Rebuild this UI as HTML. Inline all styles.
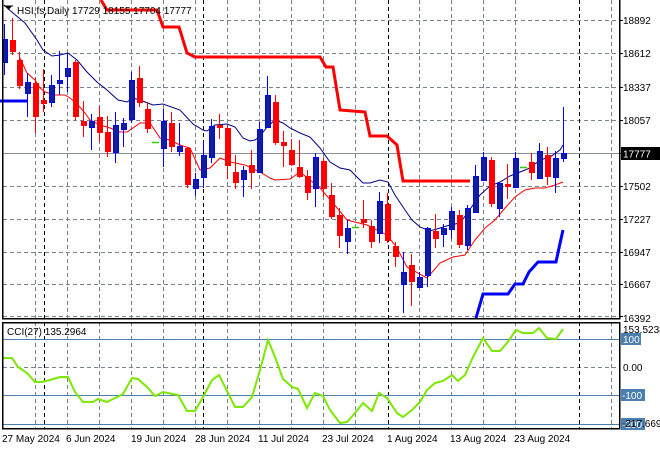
<!DOCTYPE html>
<html><head><meta charset="utf-8"><style>
html,body{margin:0;padding:0;background:#fff;}
svg{display:block;font-family:"Liberation Sans",sans-serif;font-size:10px;}
</style></head><body>
<svg width="660" height="450" viewBox="0 0 660 450" xmlns="http://www.w3.org/2000/svg">
<rect width="660" height="450" fill="#fff"/>
<g stroke="#7a8290" stroke-width="1" stroke-dasharray="4,3" fill="none" shape-rendering="crispEdges">
<path d="M35.5 0V428M67.5 0V428M99.5 0V428M131.5 0V428M163.5 0V428M195.5 0V428M227.5 0V428M259.5 0V428M291.5 0V428M323.5 0V428M355.5 0V428M419.5 0V428M451.5 0V428M483.5 0V428M515.5 0V428M611.5 0V428"/>
<path d="M3 20.5H619M3 53.5H619M3 87.5H619M3 120.5H619M3 186.5H619M3 219.5H619M3 252.5H619M3 284.5H619M3 316.5H619M3 367.5H619"/>
</g>
<g stroke="#000" stroke-width="1" stroke-dasharray="4,3" shape-rendering="crispEdges">
<path d="M44.5 0V428M203.5 0V428M388.5 0V428M579.5 0V428"/>
</g>
<path d="M3 153.5H619" stroke="#8a8f99" shape-rendering="crispEdges"/>
<g stroke="#4a7fb0" stroke-width="1.2" shape-rendering="crispEdges">
<path d="M3 339.5H619M3 395.5H619M3 424.5H619"/>
</g>
<polyline fill="none" stroke="#ff0000" stroke-width="3" points="101,0 107,10 157,10 163,27 179,27 187,53 195,57 320,57 326,67 333,67 340,110 365,112 370,136 387,136 397,145 403,181 470,181"/>
<polyline fill="none" stroke="#0000ff" stroke-width="3" points="0,101 27,101"/>
<polyline fill="none" stroke="#0000ff" stroke-width="3" points="476,318 483,294 508,294 515,284 523,284 529,272 538,262 556,262 559,248 563,230"/>
<polyline fill="none" stroke="#000080" stroke-width="1" points="4,5 13,13 25,23 37,40 43,50 52,56 60,55 68,53 77,60 87,72 97,82 107,90 118,100 127,102 133,98 140,100 153,105 163,104 180,110 193,124 203,130 207,131 215,125 227,124 235,127 243,138 250,141 255,140 260,136 267,127 275,120 283,123 290,128 300,133 310,137 320,148 330,162 340,168 350,170 357,177 363,183 370,183 380,180 388,182 395,195 405,210 412,220 420,227 430,231 440,228 450,225 460,223 466,215 480,195 490,186 500,182 510,176 520,172 530,168 540,160 550,157 560,150 563,145"/>
<polyline fill="none" stroke="#ff0000" stroke-width="1" points="20,58 27,73 35,80 40,88 45,92 55,95 65,95 70,98 78,105 85,113 90,120 100,125 110,128 120,132 127,132 133,128 140,123 150,123 160,138 170,140 180,145 190,148 200,170 210,168 220,158 230,162 245,165 260,172 270,178 275,180 290,179 300,172 320,188 333,203 347,220 367,225 387,235 397,248 407,267 427,278 440,263 453,257 465,255 475,240 485,228 495,220 505,208 515,197 525,190 535,188 545,188 555,185 563,182"/>
<g fill="#ff0000" stroke="#ff0000" shape-rendering="crispEdges">
<path fill="none" d="M12.5 18V55M19.5 52V89M35.5 78V133M43.5 69V112M75.5 60V120M83.5 101V137M99.5 106V142M107.5 116V157M139.5 66V107M147.5 102V133M171.5 112V152M187.5 147V188M219.5 114V139M227.5 125V179M235.5 155V189M251.5 150V189M275.5 95V145M283.5 131V167M291.5 139V166M299.5 140V178M307.5 170V200M323.5 158V197M331.5 183V219M339.5 208V248M363.5 200V228M371.5 220V248M387.5 193V243M395.5 242V267M411.5 254V306M435.5 214V248M459.5 210V248M491.5 157V207M507.5 164V199M531.5 153V180M547.5 147V185"/>
<g stroke="none">
<rect x="10" y="40" width="6" height="12"/><rect x="17" y="60" width="6" height="26"/><rect x="33" y="83" width="6" height="34"/><rect x="41" y="100" width="6" height="4"/><rect x="73" y="62" width="6" height="55"/><rect x="81" y="121" width="6" height="5"/><rect x="97" y="117" width="6" height="16"/><rect x="105" y="132" width="6" height="20"/><rect x="137" y="78" width="6" height="25"/><rect x="145" y="109" width="6" height="20"/><rect x="169" y="123" width="6" height="24"/><rect x="185" y="148" width="6" height="37"/><rect x="217" y="125" width="6" height="3"/><rect x="225" y="128" width="6" height="38"/><rect x="233" y="172" width="6" height="11"/><rect x="249" y="165" width="6" height="8"/><rect x="273" y="102" width="6" height="41"/><rect x="281" y="142" width="6" height="4"/><rect x="289" y="150" width="6" height="15"/><rect x="297" y="167" width="6" height="10"/><rect x="305" y="176" width="6" height="17"/><rect x="321" y="161" width="6" height="28"/><rect x="329" y="195" width="6" height="22"/><rect x="337" y="215" width="6" height="21"/><rect x="361" y="219" width="6" height="4"/><rect x="369" y="226" width="6" height="16"/><rect x="385" y="204" width="6" height="37"/><rect x="393" y="246" width="6" height="11"/><rect x="409" y="265" width="6" height="17"/><rect x="433" y="231" width="6" height="8"/><rect x="457" y="215" width="6" height="30"/><rect x="489" y="160" width="6" height="44"/><rect x="505" y="184" width="6" height="3"/><rect x="529" y="162" width="6" height="11"/><rect x="545" y="155" width="6" height="22"/>
</g></g>
<g shape-rendering="crispEdges">
<path fill="none" stroke="#0000ff" d="M4.5 24V75M27.5 73V117M51.5 75V107M59.5 51V95M67.5 53V92M91.5 114V150M115.5 112V163M123.5 118V147M131.5 72V123M163.5 109V167M179.5 123V156M195.5 173V196M203.5 142V188M211.5 119V163M243.5 166V197M259.5 122V173M267.5 76V128M315.5 153V207M347.5 220V254M379.5 192V243M403.5 252V313M419.5 272V288M427.5 227V287M443.5 224V247M451.5 207V239M467.5 205V250M475.5 165V212M483.5 152V180M499.5 182V217M515.5 152V188M539.5 143V178M555.5 151V193M563.5 107V162"/>
<g fill="#10209a" stroke="#0000ff">
<rect x="2.5" y="39.5" width="5" height="23"/><rect x="25.5" y="82.5" width="5" height="11"/><rect x="49.5" y="85.5" width="5" height="17"/><rect x="57.5" y="80.5" width="5" height="3"/><rect x="65.5" y="68.5" width="5" height="8"/><rect x="89.5" y="121.5" width="5" height="6"/><rect x="113.5" y="125.5" width="5" height="27"/><rect x="121.5" y="123.5" width="5" height="6"/><rect x="129.5" y="80.5" width="5" height="39"/><rect x="161.5" y="121.5" width="5" height="27"/><rect x="177.5" y="146.5" width="5" height="5"/><rect x="193.5" y="179.5" width="5" height="9"/><rect x="201.5" y="155.5" width="5" height="22"/><rect x="209.5" y="126.5" width="5" height="31"/><rect x="241.5" y="170.5" width="5" height="9"/><rect x="257.5" y="129.5" width="5" height="43"/><rect x="265.5" y="95.5" width="5" height="32"/><rect x="313.5" y="157.5" width="5" height="31"/><rect x="345.5" y="228.5" width="5" height="13"/><rect x="377.5" y="201.5" width="5" height="32"/><rect x="401.5" y="272.5" width="5" height="12"/><rect x="417.5" y="277.5" width="5" height="10"/><rect x="425.5" y="228.5" width="5" height="47"/><rect x="441.5" y="228.5" width="5" height="6"/><rect x="449.5" y="211.5" width="5" height="18"/><rect x="465.5" y="208.5" width="5" height="37"/><rect x="473.5" y="176.5" width="5" height="36"/><rect x="481.5" y="157.5" width="5" height="23"/><rect x="497.5" y="183.5" width="5" height="25"/><rect x="513.5" y="158.5" width="5" height="29"/><rect x="537.5" y="151.5" width="5" height="27"/><rect x="553.5" y="158.5" width="5" height="19"/><rect x="561.5" y="153.5" width="5" height="5"/>
</g></g>
<path d="M152 142.5H159M352 227.5H359M520 167.5H527" stroke="#33cc00" stroke-width="1.5"/>
<polyline fill="none" stroke="#7ce800" stroke-width="2" points="3,358 12,358 18,367 27,373 35,382 42,382 50,380 60,377 68,377 75,392 83,402 93,402 98,399 107,402 115,398 123,394 132,378 138,379 147,387 155,396 163,392 178,395 187,411 195,411 203,397 212,380 219,375 235,407 243,407 252,397 260,370 268,340 275,357 283,379 292,387 298,389 307,408 315,393 323,396 330,410 340,423 347,422 355,413 363,403 372,411 379,393 387,398 397,413 403,417 412,410 420,402 427,390 435,383 443,381 452,375 458,381 465,375 473,357 483,338 492,351 500,351 507,343 516,330 523,333 533,333 539,328 547,338 556,339 563,329"/>
<g fill="none" stroke="#000" stroke-width="1.5" shape-rendering="crispEdges">
<path d="M2.5 0V318.5H619.5V0"/>
<path d="M2.5 322.5H619.5V428.5H2.5Z"/>
</g>
<path d="M5 6L12 6L8.5 10Z" fill="#000"/>
<path d="M4 6H13" stroke="#000"/>
<text x="17" y="14" fill="#000">HSI,fs,Daily  17729 18155 17704 17777</text>
<text x="7" y="335" fill="#000">CCI(27) 135.2964</text>
<g fill="#000">
<text x="623" y="24">18892</text>
<text x="623" y="57">18612</text>
<text x="623" y="91">18337</text>
<text x="623" y="124">18057</text>
<text x="623" y="190">17502</text>
<text x="623" y="223">17227</text>
<text x="623" y="256">16947</text>
<text x="623" y="288">16667</text>
<text x="623" y="322">16392</text>
</g>
<path d="M619 153.5H623M619 20.5H623M619 53.5H623M619 87.5H623M619 120.5H623M619 186.5H623M619 219.5H623M619 252.5H623M619 284.5H623M619 316.5H623" stroke="#000"/>
<rect x="621" y="147" width="39" height="13" fill="#000"/>
<text x="623" y="157.5" fill="#fff">17777</text>
<text x="623" y="333" fill="#000">153.5238</text>
<rect x="621" y="333" width="20" height="12" fill="#4a7fb0"/>
<text x="623" y="343" fill="#fff">100</text>
<text x="623" y="371" fill="#000">0.00</text>
<rect x="621" y="389" width="24" height="12" fill="#4a7fb0"/>
<text x="622" y="399" fill="#fff">-100</text>
<rect x="621" y="418" width="24" height="12" fill="#4a7fb0"/>
<text x="622" y="428" fill="#fff">-200</text>
<text x="622" y="427" fill="#000">-217.669</text>
<g fill="#000">
<text x="2" y="442">27 May 2024</text>
<text x="66" y="442">6 Jun 2024</text>
<text x="131" y="442">19 Jun 2024</text>
<text x="195" y="442">28 Jun 2024</text>
<text x="258" y="442">11 Jul 2024</text>
<text x="322" y="442">23 Jul 2024</text>
<text x="387" y="442">1 Aug 2024</text>
<text x="450" y="442">13 Aug 2024</text>
<text x="514" y="442">23 Aug 2024</text>
</g>
</svg>
</body></html>
